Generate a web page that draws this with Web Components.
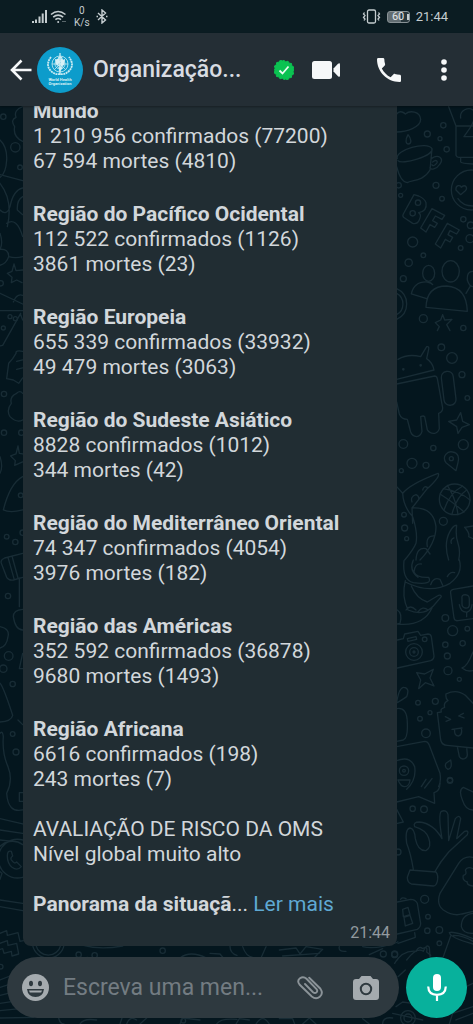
<!DOCTYPE html>
<html lang="pt">
<head>
<meta charset="utf-8">
<meta name="viewport" content="width=device-width, initial-scale=1">
<title>Organização Mundial da Saúde</title>
<style>
    html, body {
        height: 100%;
        margin: 0;
    }

    body {
        background: #04161e;
        color: #d2d7db;
        font-family: Roboto, "Noto Sans", sans-serif;
    }
</style>
</head>
<body>
<chat-screen>
    <status-bar slot="status" time="21:44" battery="60" speed="0"></status-bar>
    <chat-header slot="header">Organização...</chat-header>
    <chat-message time="21:44">
        <region-stats name="Mundo" confirmed="1 210 956 confirmados (77200)" deaths="67 594 mortes (4810)"></region-stats>
        <region-stats name="Região do Pacífico Ocidental" confirmed="112 522 confirmados (1126)" deaths="3861 mortes (23)"></region-stats>
        <region-stats name="Região Europeia" confirmed="655 339 confirmados (33932)" deaths="49 479 mortes (3063)"></region-stats>
        <region-stats name="Região do Sudeste Asiático" confirmed="8828 confirmados (1012)" deaths="344 mortes (42)"></region-stats>
        <region-stats name="Região do Mediterrâneo Oriental" confirmed="74 347 confirmados (4054)" deaths="3976 mortes (182)"></region-stats>
        <region-stats name="Região das Américas" confirmed="352 592 confirmados (36878)" deaths="9680 mortes (1493)"></region-stats>
        <region-stats name="Região Africana" confirmed="6616 confirmados (198)" deaths="243 mortes (7)"></region-stats>
        <div>AVALIAÇÃO DE RISCO DA OMS<br>Nível global muito alto</div>
        <read-more><b>Panorama da situaçã</b>...</read-more>
    </chat-message>
    <chat-composer slot="composer" placeholder="Escreva uma men..."></chat-composer>
</chat-screen>

<script>
class ChatWallpaper extends HTMLElement {
    constructor() {
        super();
        this.attachShadow({ mode: 'open' });
        this.shadowRoot.innerHTML = `
        <style>
            :host {
                display: block;
                background: #04161e;
            }
            svg {
                display: block;
                width: 100%;
                height: 100%;
                fill: none;
                stroke: #182c35;
                stroke-linecap: round;
                stroke-linejoin: round;
            }
            g {
                stroke-width: 4;
            }
        </style>
        <svg viewBox="0 0 473 1024" preserveAspectRatio="xMaxYMax slice" aria-hidden="true">
            <g transform="translate(390 100) scale(.3333)">
                <path d="M20 42C30 28 44 40 46 42C60 30 90 34 92 58C92 82 50 96 20 96M54 104C44 122 48 132 56 132C66 130 64 116 54 104Z"/>
                <path d="M22 176C14 150 112 122 126 146C132 168 34 196 24 182M126 146L120 210C100 244 66 240 52 248C34 246 24 216 20 200M124 176C146 160 162 176 150 192C140 208 120 212 120 202M128 186C140 176 146 186 138 192C134 198 126 198 126 194"/>
                <path d="M176 20L198 78V166Q200 172 206 172H249M198 78H249M212 172V186Q214 190 249 192M212 54C208 30 236 20 249 30M222 110C230 98 249 74 249 66M222 110H249"/>
                <circle cx="244" cy="270" r="60"/><path d="M198 270C196 254 212 254 214 262C226 250 234 264 226 272L212 284ZM204 296Q218 318 249 318"/>
                <path d="M72 284L40 342Q36 350 44 354L68 370Q86 374 90 354Q94 344 86 338Q112 334 108 308Q104 296 86 288Z"/><circle cx="84" cy="308" r="8"/><circle cx="68" cy="340" r="8"/>
                <path d="M126 326L92 384L108 396L120 374L134 382L142 370L128 362L136 348L156 358L164 346ZM172 370L136 432L152 444L166 418L180 426L188 412L174 404L180 392L200 402L208 390Z"/>
                <ellipse cx="116" cy="520" rx="18" ry="24"/><ellipse cx="182" cy="514" rx="26" ry="32"/><path d="M108 622Q110 558 170 558Q230 562 232 634ZM110 596L64 582Q72 544 112 546Q124 548 128 554M249 514Q230 514 232 540Q238 560 249 560M240 560L228 580"/>
                <path d="M20 566C60 584 60 640 20 658M20 580C46 594 44 632 20 644M158 644L164 660L186 658L170 674L180 692M158 644L152 660L136 668L148 680L142 692"/>
                <circle cx="160" cy="76" r="8"/><circle cx="112" cy="102" r="9"/><circle cx="150" cy="116" r="6"/><circle cx="170" cy="148" r="8"/><circle cx="138" cy="256" r="9"/><circle cx="156" cy="296" r="7"/><circle cx="32" cy="286" r="6"/><circle cx="26" cy="256" r="8"/><circle cx="68" cy="426" r="15"/><circle cx="220" cy="358" r="8"/><circle cx="242" cy="376" r="10"/><circle cx="240" cy="416" r="12"/><circle cx="212" cy="444" r="7"/><circle cx="100" cy="466" r="7"/><circle cx="56" cy="488" r="11"/><circle cx="40" cy="536" r="9"/><circle cx="100" cy="656" r="12"/><circle cx="220" cy="684" r="8"/>
            </g>
            <g transform="translate(390 330) scale(.3333)">
                <path d="M24 88Q54 70 92 80L110 50Q118 48 116 58L110 86Q128 98 132 120L20 148M20 162L134 138Q140 138 142 146L158 234Q158 246 146 250L148 296Q144 308 134 310Q120 312 112 300L104 260Q100 256 92 260L96 304Q92 318 80 320Q66 318 62 306L52 268Q34 268 28 252L20 216"/>
                <circle cx="40" cy="118" r="2"/><circle cx="92" cy="106" r="2"/><rect x="158" y="124" width="36" height="102" rx="17" transform="rotate(-7 176 175)"/>
                <path d="M212 248L218 274L238 284L216 292L204 310L200 290L176 274L200 270ZM198 422L168 398C154 378 174 362 188 366C206 368 208 386 204 398Z"/><circle cx="184" cy="386" r="6"/>
                <circle cx="194" cy="508" r="46"/><path d="M150 492Q194 520 222 546M160 476Q210 484 240 510M172 466Q198 506 204 554M218 468Q178 490 162 540M230 480Q200 500 186 552"/>
                <path d="M20 470L38 490Q60 462 144 430Q154 438 110 478L66 534Q130 530 138 590Q138 640 90 690M38 490Q40 530 68 560Q84 610 78 640Q70 660 44 690M66 534L68 580M66 516Q60 500 78 494Q88 498 86 508M98 480Q102 466 112 472M112 650Q106 616 134 618M78 690Q80 650 108 656L120 672M176 690Q160 640 180 604Q192 584 200 586Q196 620 204 640Q212 664 206 690M184 640Q180 628 192 624M224 592L249 588M224 592Q240 610 236 620L249 626"/>
                <circle cx="154" cy="52" r="10"/><circle cx="186" cy="84" r="16"/><circle cx="216" cy="134" r="9"/><circle cx="232" cy="204" r="7"/><circle cx="40" cy="342" r="13"/><circle cx="130" cy="354" r="8"/><circle cx="220" cy="344" r="15"/><circle cx="66" cy="400" r="15"/><circle cx="108" cy="406" r="9"/><circle cx="34" cy="422" r="6"/><circle cx="42" cy="554" r="7"/><circle cx="160" cy="574" r="12"/><circle cx="44" cy="594" r="9"/><circle cx="50" cy="626" r="6"/>
            </g>
            <g transform="translate(390 560) scale(.3333)">
                <path d="M42 2Q36 60 70 68Q130 76 116 52Q80 54 72 36Q74 10 94 12M70 0Q56 30 84 52M46 62Q34 110 54 150Q100 170 130 138L154 110Q152 102 142 108L112 126Q80 116 64 78M46 66Q120 104 180 70Q220 40 208 0M122 74Q130 50 150 58L158 76M172 50Q180 34 194 38M48 150Q60 132 78 150M84 156Q98 136 114 150M22 150Q38 160 30 190L22 192Q100 200 126 144"/>
                <path d="M249 78L190 88Q180 90 182 100L192 174Q194 184 204 182L249 176M216 116Q214 104 226 104Q238 106 238 116V136Q236 146 226 144Q216 142 216 132ZM208 134Q212 158 232 156Q244 152 246 134M230 158V170"/>
                <path d="M22 240L40 236L44 222L84 214L92 226L114 222Q122 222 124 230L132 288Q132 298 122 302L22 324M52 236L78 230L80 238L54 244Z"/><circle cx="72" cy="276" r="25"/><circle cx="72" cy="276" r="13"/><circle cx="72" cy="276" r="3"/><circle cx="104" cy="238" r="7"/>
                <path d="M80 338L104 342L130 328L120 354L132 378L106 368L86 386L92 360ZM249 276Q232 320 216 324Q230 336 249 332"/>
                <path d="M168 402Q166 416 174 422Q160 428 164 442Q150 446 154 456L142 458L152 540Q156 556 172 556L249 564M168 402Q200 386 226 406L249 430M166 470L182 478L168 484M220 460L206 468L222 474M186 508L216 504M194 508Q192 528 206 528Q218 524 214 506M202 560L208 590Q214 600 224 596Q232 592 232 584L230 562"/>
                <path d="M20 426Q28 380 42 382Q60 384 50 410Q36 420 22 428M20 446Q52 440 52 490Q54 534 40 540L20 544M20 560L104 544Q114 544 118 556L150 640Q154 664 146 680M20 602Q60 586 74 620Q80 660 50 688M94 680L108 658M104 684L126 656M182 600Q188 626 174 628Q162 622 168 610Z"/><circle cx="42" cy="632" r="14"/><circle cx="42" cy="632" r="4"/><path d="M24 660H60Q58 680 44 680Q32 680 24 660Z"/>
                <circle cx="166" cy="174" r="10"/><circle cx="188" cy="212" r="15"/><circle cx="232" cy="206" r="7"/><circle cx="166" cy="254" r="8"/><circle cx="218" cy="250" r="8"/><circle cx="172" cy="288" r="9"/><circle cx="174" cy="332" r="12"/><circle cx="208" cy="358" r="6"/><circle cx="84" cy="428" r="7"/><circle cx="136" cy="424" r="9"/><circle cx="120" cy="458" r="6"/><circle cx="90" cy="476" r="7"/><circle cx="108" cy="520" r="13"/><circle cx="180" cy="660" r="8"/>
            </g>
            <g transform="translate(390 780) scale(.3333)">
                <path d="M20 66L86 50L134 70L132 38Q150 34 150 10M20 88L40 126L22 130M70 268Q62 220 50 190Q44 148 60 144Q74 146 76 176Q84 214 108 212Q126 202 116 174Q108 150 74 140Q68 126 88 126Q130 130 156 176Q144 104 154 94Q170 88 174 104L176 182L196 116Q208 102 212 116L200 176L224 154Q238 150 232 164L176 216Q150 246 134 276M60 270L138 276Q146 286 142 304Q138 318 130 318L64 312Q52 308 52 292Z"/>
                <path d="M220 22Q204 30 218 62Q226 90 249 90M220 22L249 36M249 232Q222 226 206 250L150 340Q138 374 160 390Q190 410 216 402L249 394M249 266Q232 258 226 270Q232 284 220 286Q216 302 232 306Q230 316 249 318M22 366L62 358Q76 358 82 370L92 430Q92 442 82 448L22 462M24 490L76 472L74 458M32 358Q36 350 48 356M38 388L54 382L60 404L40 410ZM42 412L60 406L68 430L46 438ZM249 400Q214 404 214 440Q220 462 249 460M178 458Q190 452 249 476M178 458Q182 474 249 492M182 468L160 530M190 466Q220 466 249 484"/>
                <circle cx="68" cy="86" r="8"/><circle cx="102" cy="88" r="10"/><circle cx="24" cy="216" r="9"/><circle cx="104" cy="358" r="12"/><circle cx="114" cy="410" r="7"/><circle cx="112" cy="452" r="8"/><circle cx="148" cy="450" r="10"/><circle cx="148" cy="490" r="7"/><circle cx="14" cy="522" r="9"/><circle cx="180" cy="2" r="8"/>
                <path d="M50 540Q80 500 100 514Q110 490 118 502L120 530"/>
            </g>
            <g transform="translate(0 100) scale(.3333)">
                <path d="M68 20Q40 30 48 52Q30 60 44 80Q38 110 68 124M0 120Q22 140 20 180Q18 220 0 232M0 224L68 242M0 250Q40 300 22 380M0 330Q20 350 30 320Q40 270 68 264M68 290Q50 300 52 330L68 344M20 370Q50 350 68 410M0 400Q10 430 0 448M0 448Q26 446 26 470Q20 490 0 496M26 470Q46 476 68 470M42 492L48 512L68 510M42 492L36 514L22 520L36 532L34 548L50 540L66 548M0 580L68 612M0 632H68M40 606Q50 580 68 586M62 640L8 736L0 738M62 644L68 660"/>
                <path d="M48 760Q46 750 68 754M48 760L38 776L26 790L20 836L40 840L56 850L68 834M50 784L68 780M50 808L68 804M50 880Q28 890 34 910Q18 930 30 950Q50 970 68 960M50 880Q60 870 68 880M54 1038L58 1060L68 1062M54 1038L48 1062L32 1068L46 1082L44 1096L68 1086M0 1070Q10 1100 0 1120M68 1130Q30 1150 10 1230Q30 1240 68 1230"/>
                <circle cx="10" cy="50" r="8"/><circle cx="46" cy="142" r="14"/><circle cx="60" cy="202" r="7"/><circle cx="2" cy="550" r="8"/><circle cx="30" cy="650" r="6"/><circle cx="46" cy="656" r="6"/><circle cx="10" cy="684" r="6"/><circle cx="12" cy="882" r="8"/><circle cx="12" cy="998" r="8"/><circle cx="64" cy="998" r="8"/><circle cx="62" cy="1186" r="7"/>
            </g>
            <g transform="translate(0 520) scale(.3333)">
                <path d="M4 130Q0 120 14 114L68 100M4 130L20 172Q26 182 40 180L68 172M24 112L42 176M36 108L54 174M58 174V260M68 268Q40 270 40 290Q46 330 68 330M0 320Q30 326 24 350Q20 380 0 384M68 400L58 446H68M0 490Q10 500 38 586Q34 604 0 606M54 600L68 614M0 640Q8 630 10 650Q6 700 24 740Q40 780 20 820Q24 880 68 870M68 818H58V844H68M0 896L68 912M0 930L68 940M0 960L40 964M0 1140L68 1150M0 1160L68 1172"/>
                <path d="M68 960A58 58 0 1 0 68 1072M68 974A46 46 0 0 0 6 1060L0 1078M22 1008Q22 990 34 994L38 1008Q30 1014 34 1020Q44 1034 50 1026L64 1040Q52 1054 36 1042Q22 1030 22 1008Z"/>
                <circle cx="20" cy="50" r="7"/><circle cx="46" cy="66" r="8"/><circle cx="68" cy="38" r="8"/><circle cx="24" cy="228" r="8"/><circle cx="26" cy="408" r="13"/><circle cx="10" cy="446" r="11"/><circle cx="38" cy="492" r="8"/><circle cx="38" cy="642" r="7"/><circle cx="48" cy="696" r="9"/>
            </g>
            <g transform="translate(0 930) scale(.3333)">
                <path d="M0 10L20 2L22 16L54 8L60 34L70 32M0 40L22 32L24 46L50 40L56 72L36 78L34 64L12 70L8 56L0 58M98 46A48 48 0 0 0 192 46M108 46A38 38 0 0 0 182 46M250 46Q300 60 368 48M540 84Q570 60 620 84M630 70L660 72L670 84M690 48Q690 70 711 76"/>
                <path d="M0 150L30 138M0 172L26 164M0 196L24 190M0 220L40 214M0 242L60 236M0 264L100 262M176 264Q180 282 192 282M240 282Q250 264 290 270M360 282L366 264M380 282Q390 256 410 270M420 282L440 264M540 282L548 264L600 270M650 282Q660 264 711 268"/>
                <circle cx="2" cy="110" r="7"/><circle cx="236" cy="74" r="8"/><circle cx="262" cy="90" r="8"/><circle cx="284" cy="76" r="8"/><circle cx="488" cy="62" r="8"/><circle cx="550" cy="272" r="7"/>
            </g>
            <g transform="translate(236 880) scale(.3333)">
                <path d="M20 200Q30 230 50 232M90 200L76 232M130 210L180 204L192 222L210 200L260 208L236 232M140 228L250 220M310 200Q306 216 330 214M380 200Q420 210 486 186M400 224L440 206M476 250Q500 210 540 214Q550 196 560 206Q576 196 572 216L584 226M486 290L508 270M0 432L10 416L40 420M60 432Q80 400 100 432M130 416H170L176 432M200 432L220 414L240 432M380 416L400 432M440 432Q440 410 470 414M480 380L500 366L530 370M470 400L560 420M640 432L650 400L711 380M690 320L711 310M660 420L711 400"/>
                <circle cx="516" cy="414" r="22"/><circle cx="516" cy="414" r="12"/><circle cx="442" cy="222" r="9"/><circle cx="476" cy="224" r="9"/>
            </g>
        </svg>
        `;
    }
}

class ChatScreen extends HTMLElement {
    constructor() {
        super();
        this.attachShadow({ mode: 'open' });
        this.shadowRoot.innerHTML = `
        <style>
            :host {
                display: flex;
                flex-direction: column;
                position: relative;
                height: 100vh;
                overflow: hidden;
            }
            chat-wallpaper {
                position: absolute;
                inset: 0;
                z-index: -1;
            }
            main {
                display: flex;
                flex: 1;
                flex-direction: column;
                justify-content: flex-end;
                min-height: 0;
                overflow: hidden;
                padding: 0 76px 11px 23px;
            }
        </style>
        <chat-wallpaper></chat-wallpaper>
        <slot name="status"></slot>
        <slot name="header"></slot>
        <main><slot></slot></main>
        <slot name="composer"></slot>
        `;
    }
}

class StatusBar extends HTMLElement {
    constructor() {
        super();
        this.attachShadow({ mode: 'open' });
        this.shadowRoot.innerHTML = `
        <style>
            :host {
                display: flex;
                flex: none;
                align-items: center;
                justify-content: space-between;
                height: 33px;
                padding: 0 25px 0 32px;
                background: #0b1c22;
                color: #c5cdd0;
                font-size: 13px;
            }
            div {
                display: flex;
                align-items: center;
            }
            svg {
                display: block;
                fill: none;
                stroke: currentColor;
            }
            .left {
                gap: 3px;
            }
            .right {
                gap: 6px;
            }
            .speed {
                padding: 0 3px 0 4px;
                font-size: 10px;
                line-height: 12px;
                text-align: center;
            }
            .speed p {
                margin: 0;
            }
            .speed span {
                display: block;
            }
            .battery {
                justify-content: center;
                width: 21px;
                height: 10px;
                border: 1px solid #899296;
                border-radius: 3px;
                background: linear-gradient(90deg, #626d72 60%, #27363c 60%);
                color: #e2e6e8;
                font-size: 11px;
                line-height: 10px;
            }
            .battery::after {
                content: "";
                width: 2px;
                height: 6px;
                margin-right: -5px;
                margin-left: 3px;
                background: #c5cdd0;
            }
        </style>
        <div class="left">
            <svg width="15" height="14" viewBox="0 0 15 14" stroke-width="2" aria-hidden="true"><path d="M1 13v-2M4 13V9.500M7.500 13V6.500M10.700 13V3.500M14 13V0"/></svg>
            <svg width="17" height="14" viewBox="0 0 17 14" stroke-width="1.600" aria-hidden="true"><path d="M1 4.500Q8 -1.500 15.500 4.500M3.200 7.200Q8 3 13.200 7.200M5.400 9.700Q8 7.300 11 9.700"/><circle cx="8.200" cy="12" r="1" fill="currentColor" stroke="none"/><path d="M12 11.500h4" stroke="#59666b" stroke-width="1"/></svg>
            <div class="speed"><p><span class="rate"></span><span>K/s</span></p></div>
            <svg width="12" height="15" viewBox="0 0 12 15" stroke-width="1.400" aria-hidden="true"><path d="M2 4l7.500 7L6 14V1l3.500 3L2 11M.5 7.500H2M10 7.500h1.500"/></svg>
        </div>
        <div class="right">
            <svg width="19" height="15" viewBox="0 0 19 15" stroke-width="1.300" aria-hidden="true"><rect x="5.500" y="1" width="8" height="13" rx="1.500"/><path d="M2.500 3.500l-1 1.500 1.500 1.500-1.500 2L3 10l-1 1.500M16.500 3.500l1 1.500L16 6.500l1.500 2L16 10l1 1.500"/></svg>
            <div class="battery"><span class="level"></span></div>
            <span class="clock"></span>
        </div>
        `;
    }

    connectedCallback() {
        this.shadowRoot.querySelector('.rate').textContent = this.getAttribute('speed');
        this.shadowRoot.querySelector('.level').textContent = this.getAttribute('battery');
        this.shadowRoot.querySelector('.clock').textContent = this.getAttribute('time');
    }
}

class ChatHeader extends HTMLElement {
    constructor() {
        super();
        this.attachShadow({ mode: 'open' });
        this.shadowRoot.innerHTML = `
        <style>
            :host {
                display: flex;
                flex: none;
                align-items: center;
                height: 73px;
                padding: 0 5px;
                background: #242e35;
                box-shadow: 0 1px 2px rgba(0, 0, 0, 0.3);
                z-index: 1;
            }
            button {
                display: flex;
                align-items: center;
                justify-content: center;
                height: 48px;
                padding: 0;
                border: 0;
                background: none;
                color: #f6f8f9;
                cursor: pointer;
            }
            svg {
                display: block;
                flex: none;
            }
            h1 {
                flex: 1;
                min-width: 0;
                margin: 0 0 0 10px;
                overflow: hidden;
                color: #d8dce2;
                font-size: 23px;
                font-weight: 500;
                line-height: 30px;
                white-space: nowrap;
            }
            .back {
                width: 32px;
            }
            .video {
                width: 64px;
            }
            .call {
                width: 62px;
            }
            .menu {
                width: 48px;
            }
        </style>
        <button class="back" aria-label="Voltar"><svg width="22" height="22" viewBox="0 0 22 22" fill="none" stroke="currentColor" stroke-width="2.600"><path d="M21.500 11H2.500M11.500 1.500L2 11l9.500 9.500"/></svg></button>
        <svg class="avatar" width="46" height="46" viewBox="0 0 46 46" role="img" aria-label="World Health Organization">
            <circle cx="23" cy="23" r="23" fill="#0d9ccb"/>
            <g fill="none" stroke="#c9ebf3" stroke-width=".8">
                <circle cx="23" cy="17" r="8"/><circle cx="23" cy="17" r="5"/><path d="M15 17h16M23 9v16M17.500 11.500l11 11M28.500 11.500l-11 11"/>
                <path d="M14 10Q8 18 14 24Q18 28 23 27Q28 28 32 24Q38 18 32 10" stroke-width="1.800" stroke-dasharray="2 .6"/>
                <path d="M23 6v22M21 11q4-2 4 1t-4 3 0 3 4 3-3 3" stroke-width="1.300"/>
            </g>
            <path d="M18 13l4-2 1 4-3 4zM24 12l4 1-1 5-3 2zM21 20l4 1-2 3z" fill="#d7f0f5"/>
            <g fill="#d7f0f5" font-family="Roboto, sans-serif" font-size="4" font-weight="700" text-anchor="middle"><text x="23" y="34">World Health</text><text x="23" y="38">Organization</text></g>
        </svg>
        <h1><slot></slot></h1>
        <svg width="20" height="20" viewBox="0 0 20 20" role="img" aria-label="Conta verificada"><path fill="#0bc251" stroke="#0bc251" stroke-width="1" stroke-linejoin="round" d="M10 0.500l1.800 1.400 2.200-.7 1.200 2 2.300.3.300 2.300 2 1.200-.7 2.200L20 10l-1 1.800.7 2.200-2 1.200-.3 2.300-2.300.3-1.200 2-2.200-.7L10 19.500l-1.800-1.400-2.200.7-1.200-2-2.300-.3-.3-2.300-2-1.200.7-2.200L0.500 10l.6-1.800L.4 6l2-1.200.3-2.300L5 2.200l1.200-2 2 .7z"/><path d="M5.500 10.500l3 3 6-7" fill="none" stroke="#eafbf0" stroke-width="1.800"/></svg>
        <button class="video" aria-label="Videochamada"><svg width="28" height="18" viewBox="0 0 28 18" fill="currentColor"><rect width="20" height="18" rx="2.500"/><path d="M21.500 7.500L26 2.800Q28 1.500 28 3.500v11Q28 16.500 26 15.200L21.500 10.500z"/></svg></button>
        <button class="call" aria-label="Chamada de voz"><svg width="24" height="24" viewBox="3 3 18 18" fill="currentColor"><path d="M6.620 10.790c1.440 2.830 3.760 5.140 6.590 6.590l2.200-2.200c.27-.27.67-.36 1.020-.24 1.120.37 2.330.57 3.570.57.55 0 1 .45 1 1V20c0 .55-.45 1-1 1-9.390 0-17-7.610-17-17 0-.55.45-1 1-1h3.500c.55 0 1 .45 1 1 0 1.250.2 2.450.57 3.570.11.35.03.74-.25 1.020l-2.200 2.200z"/></svg></button>
        <button class="menu" aria-label="Mais opções"><svg width="6" height="22" viewBox="0 0 6 22" fill="currentColor"><circle cx="3" cy="3" r="2.800"/><circle cx="3" cy="11" r="2.800"/><circle cx="3" cy="19" r="2.800"/></svg></button>
        `;
    }
}

class ChatMessage extends HTMLElement {
    constructor() {
        super();
        this.attachShadow({ mode: 'open' });
        this.shadowRoot.innerHTML = `
        <style>
            :host {
                display: block;
                flex: none;
                padding: 6px 7px 3px 10px;
                border-radius: 8px;
                background: #212d33;
                font-size: 21px;
                line-height: 25px;
            }
            .text {
                display: flex;
                flex-direction: column;
                gap: 25px;
            }
            time {
                display: block;
                margin-top: 6px;
                color: #929a9f;
                font-size: 16px;
                line-height: 20px;
                text-align: right;
            }
        </style>
        <div class="text"><slot></slot></div>
        <time></time>
        `;
    }

    connectedCallback() {
        this.shadowRoot.querySelector('time').textContent = this.getAttribute('time');
    }
}

class RegionStats extends HTMLElement {
    constructor() {
        super();
        this.attachShadow({ mode: 'open' });
        this.shadowRoot.innerHTML = `
        <style>
            :host {
                display: block;
            }
            h2 {
                margin: 0;
                padding-top: 2px;
                font-size: inherit;
                font-weight: 700;
                line-height: 26px;
            }
            p {
                margin: 0;
            }
        </style>
        <h2></h2>
        <p class="confirmed"></p>
        <p class="deaths"></p>
        `;
    }

    connectedCallback() {
        this.shadowRoot.querySelector('h2').textContent = this.getAttribute('name');
        this.shadowRoot.querySelector('.confirmed').textContent = this.getAttribute('confirmed');
        this.shadowRoot.querySelector('.deaths').textContent = this.getAttribute('deaths');
    }
}

class ReadMore extends HTMLElement {
    constructor() {
        super();
        this.attachShadow({ mode: 'open' });
        this.shadowRoot.innerHTML = `
        <style>
            :host {
                display: block;
            }
            a {
                color: #5fa9d3;
                text-decoration: none;
            }
        </style>
        <slot></slot> <a href="#mais">Ler mais</a>
        `;
    }
}

class ChatComposer extends HTMLElement {
    constructor() {
        super();
        this.attachShadow({ mode: 'open' });
        this.shadowRoot.innerHTML = `
        <style>
            :host {
                display: flex;
                flex: none;
                gap: 7px;
                padding: 0 6px 6px 7px;
            }
            .field {
                display: flex;
                flex: 1;
                align-items: center;
                min-width: 0;
                padding-right: 5px;
                border-radius: 31px;
                background: #2e393f;
            }
            button {
                display: flex;
                flex: none;
                align-items: center;
                justify-content: center;
                width: 56px;
                height: 56px;
                padding: 0;
                border: 0;
                background: none;
                color: #a5abaf;
                cursor: pointer;
            }
            svg {
                display: block;
            }
            input {
                flex: 1;
                min-width: 0;
                padding: 0;
                border: 0;
                outline: 0;
                background: none;
                color: #d5dade;
                font: 23px/32px Roboto, "Noto Sans", sans-serif;
            }
            input::placeholder {
                color: #737c82;
                opacity: 1;
            }
            .mic {
                width: 61px;
                height: 61px;
                border-radius: 50%;
                background: #08b19c;
                color: #fff;
            }
        </style>
        <div class="field">
            <button aria-label="Emoji"><svg width="27" height="27" viewBox="0 0 27 27"><circle cx="13.500" cy="13.500" r="13.500" fill="currentColor"/><g fill="#2e393f"><ellipse cx="9" cy="9.500" rx="2" ry="2.800"/><ellipse cx="18" cy="9.500" rx="2" ry="2.800"/><path d="M5 15h17q-1 8-8.500 8T5 15z"/></g><path d="M7 16.500h13l-.8 2H7.800z" fill="currentColor"/></svg></button>
            <input type="text" aria-label="Mensagem">
            <button aria-label="Anexar"><svg width="28" height="28" viewBox="0 0 28 28" fill="none" stroke="#8b9398" stroke-width="1.900" stroke-linecap="round"><path d="M9 11.500l8 8.200q2 1.600 3.500.2t0-3.400L10.500 6.300Q7.300 3.300 4 5.800t-.5 6.200L15.800 24q4.200 3.400 8 .2t.6-8L13.200 5.200" transform="translate(0 -1.500)"/></svg></button>
            <button aria-label="Câmara"><svg width="26" height="24" viewBox="0 0 26 24"><path fill="currentColor" d="M8.500 0h9l2.500 3h3q3 0 3 3v15q0 3-3 3H3q-3 0-3-3V6q0-3 3-3h3z"/><circle cx="13" cy="13" r="5.200" fill="none" stroke="#2e393f" stroke-width="2"/></svg></button>
        </div>
        <button class="mic" aria-label="Gravar mensagem de voz"><svg width="20" height="27" viewBox="0 0 20 27"><rect x="6" width="8" height="17" rx="4" fill="currentColor"/><path d="M1.200 12.500q.3 8.300 8.800 8.300t8.800-8.300M10 21v6" fill="none" stroke="currentColor" stroke-width="2.200"/></svg></button>
        `;
    }

    connectedCallback() {
        this.shadowRoot.querySelector('input').placeholder = this.getAttribute('placeholder');
    }
}

customElements.define('chat-wallpaper', ChatWallpaper);
customElements.define('chat-screen', ChatScreen);
customElements.define('status-bar', StatusBar);
customElements.define('chat-header', ChatHeader);
customElements.define('chat-message', ChatMessage);
customElements.define('region-stats', RegionStats);
customElements.define('read-more', ReadMore);
customElements.define('chat-composer', ChatComposer);
</script>
</body>
</html>
